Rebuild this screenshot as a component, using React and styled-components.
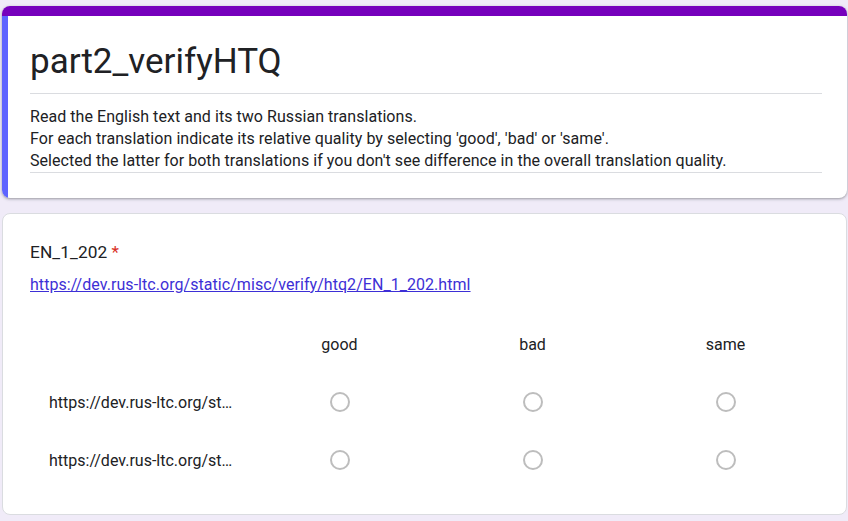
import React from "react";
import styled, { createGlobalStyle } from "styled-components";

const GlobalStyle = createGlobalStyle`
  body {
    margin: 0;
    background: #f0ebf8;
    font-family: Roboto, "Liberation Sans", Arial, sans-serif;
    color: #202124;
  }
`;

const Page = styled.div`
  padding: 6px 1px 20px 2px;
  display: flex;
  flex-direction: column;
  gap: 15px;
  width: 845px;
`;

const HeaderCard = styled.div`
  background: #fff;
  border-radius: 8px;
  box-shadow: 0 1px 2px 0 rgba(60, 64, 67, 0.3), 0 1px 3px 1px rgba(60, 64, 67, 0.15);
  overflow: hidden;
`;

const TopBar = styled.div`
  height: 10px;
  background: #7600bc;
`;

const HeaderBody = styled.div`
  border-left: 6px solid #5e64ff;
  padding: 26px 25px 25px 22px;
`;

const Title = styled.h1`
  margin: 0;
  font-size: 35px;
  font-weight: 400;
  line-height: 40px;
  padding-bottom: 11px;
  border-bottom: 1px solid #dadce0;
  letter-spacing: 0;
`;

const Description = styled.div`
  padding-top: 12px;
  font-size: 16px;
  line-height: 22px;
  letter-spacing: 0.05px;
  border-bottom: 1px solid #dadce0;
`;

const QuestionCard = styled.div`
  background: #fff;
  border: 1px solid #dadce0;
  border-radius: 8px;
  padding: 26px 25px 30px 27px;
`;

const QuestionTitle = styled.div`
  font-size: 17.3px;
  line-height: 24px;
  letter-spacing: 0.1px;
`;

const Star = styled.span`
  color: #d93025;
  margin-left: 4px;
`;

const Link = styled.a`
  display: block;
  margin-top: 11px;
  font-size: 16px;
  line-height: 20px;
  letter-spacing: 0.05px;
  color: #3d2fd6;
  text-decoration: underline;
`;

const Grid = styled.div`
  margin-top: 25px;
  display: grid;
  grid-template-columns: 213px repeat(3, 193px);
  grid-auto-rows: 48px;
  row-gap: 10px;
`;

const Cell = styled.div`
  display: flex;
  align-items: center;
  justify-content: ${(p) => (p.$label ? "flex-start" : "center")};
  padding-left: ${(p) => (p.$label ? "19px" : "0")};
  font-size: 16px;
  min-width: 0;
`;

const RowLabel = styled.span`
  white-space: nowrap;
  overflow: hidden;
  text-overflow: ellipsis;
  max-width: 184px;
`;

const Radio = styled.span`
  width: 20px;
  height: 20px;
  box-sizing: border-box;
  border: 2px solid #bdbdbd;
  border-radius: 50%;
`;

const columns = ["good", "bad", "same"];
const rows = [
  "https://dev.rus-ltc.org/static/misc/verify/htq2/RU_1_202_a.html",
  "https://dev.rus-ltc.org/static/misc/verify/htq2/RU_1_202_b.html",
];

export default function App() {
  return (
    <>
      <GlobalStyle />
      <Page>
        <HeaderCard>
          <TopBar />
          <HeaderBody>
            <Title>part2_verifyHTQ</Title>
            <Description>
              Read the English text and its two Russian translations.
              <br />
              For each translation indicate its relative quality by selecting 'good', 'bad' or 'same'.
              <br />
              Selected the latter for both translations if you don't see difference in the overall translation quality.
            </Description>
          </HeaderBody>
        </HeaderCard>

        <QuestionCard>
          <QuestionTitle>
            EN_1_202<Star>*</Star>
          </QuestionTitle>
          <Link href="#">https://dev.rus-ltc.org/static/misc/verify/htq2/EN_1_202.html</Link>
          <Grid>
            <Cell $label />
            {columns.map((c) => (
              <Cell key={c}>{c}</Cell>
            ))}
            {rows.map((r) => (
              <React.Fragment key={r}>
                <Cell $label>
                  <RowLabel>{r}</RowLabel>
                </Cell>
                {columns.map((c) => (
                  <Cell key={c}>
                    <Radio />
                  </Cell>
                ))}
              </React.Fragment>
            ))}
          </Grid>
        </QuestionCard>
      </Page>
    </>
  );
}
